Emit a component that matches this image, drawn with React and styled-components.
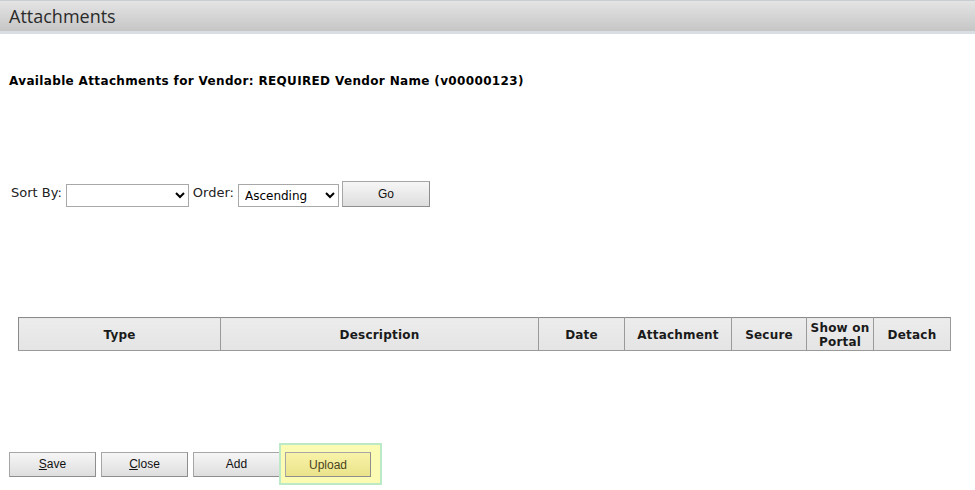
import styled, { createGlobalStyle } from "styled-components"

const Global = createGlobalStyle`
  html, body { margin: 0; padding: 0; background: #fff; }
  body { font-family: Verdana, "DejaVu Sans", sans-serif; color: #000; }
`

const columns = [
  { label: "Type", width: 201 },
  { label: "Description", width: 317 },
  { label: "Date", width: 85 },
  { label: "Attachment", width: 106 },
  { label: "Secure", width: 74 },
  { label: ["Show on", "Portal"], width: 66 },
  { label: "Detach", width: 76 },
]

export default function App() {
  return (
    <Page>
      <Global />
      <TitleBar>Attachments</TitleBar>
      <Heading>Available Attachments for Vendor: REQUIRED Vendor Name (v00000123)</Heading>
      <SortRow>
        <Label>Sort By:</Label>
        <Select width={123} defaultValue="">
          <option value=""></option>
          <option>Type</option>
          <option>Date</option>
        </Select>
        <Label>Order:</Label>
        <Select width={101} defaultValue="asc">
          <option value="asc">Ascending</option>
          <option value="desc">Descending</option>
        </Select>
        <Button width={88} tall>Go</Button>
      </SortRow>
      <TableWrap>
        <Table>
          <thead>
            <tr>
              {columns.map((c, i) => (
                <Th key={i} width={c.width}>
                  {Array.isArray(c.label) ? <>{c.label[0]}<br />{c.label[1]}</> : c.label}
                </Th>
              ))}
            </tr>
          </thead>
        </Table>
      </TableWrap>
      <Footer>
        <Button width={87}><u>S</u>ave</Button>
        <Button width={87}><u>C</u>lose</Button>
        <Button width={87}>Add</Button>
        <Highlight>
          <Button width={86} active>Upload</Button>
        </Highlight>
      </Footer>
    </Page>
  )
}

const Page = styled.div`
  width: 975px;
  height: 490px;
  overflow: hidden;
`
const TitleBar = styled.div`
  height: 30px;
  border-top: 1px solid #c9ced3;
  border-bottom: 3px solid #d8dee3;
  background: linear-gradient(#e4e4e4, #c6c6c6);
  padding-left: 9px;
  font-family: "Open Sans", "Liberation Sans", sans-serif;
  font-size: 18px;
  line-height: 30px;
  color: #2b2b2b;
`
const Heading = styled.div`
  margin: 39px 0 0 9px;
  font-size: 12px;
  font-weight: bold;
  line-height: 16px;
  letter-spacing: 0.35px;
`
const SortRow = styled.div`
  display: flex;
  align-items: flex-start;
  margin: 92px 0 0 11px;
  gap: 4px;
  & > button { margin-left: -1px; }
`
const Label = styled.span`
  font-size: 13px;
  line-height: 14px;
  padding-top: 5px;
  color: #222;
`
const Select = styled.select`
  width: ${p => p.width}px;
  height: 23px;
  margin-top: 3px;
  font-family: Verdana, "DejaVu Sans", sans-serif;
  font-size: 12px;
  border: 1px solid #a8a8a8;
  background: #fff;
  padding: 0 2px;
  color: #000;
`
const Button = styled.button`
  width: ${p => p.width}px;
  height: ${p => (p.tall ? 26 : 25)}px;
  border: 1px solid #a6a6a6;
  border-right-color: #8e8e8e;
  border-bottom-color: #8e8e8e;
  border-radius: 0;
  background: ${p => (p.active
    ? "linear-gradient(#f7f3a8, #ebe38b)"
    : "linear-gradient(#f6f6f6, #dedede)")};
  font-family: Arial, "Liberation Sans", sans-serif;
  font-size: 12px;
  color: ${p => (p.active ? "#4a4420" : "#111")};
  padding: 0;
  cursor: pointer;
`
const TableWrap = styled.div`
  margin: 110px 0 0 18px;
`
const Table = styled.table`
  border-collapse: collapse;
  width: 932px;
  table-layout: fixed;
`
const Th = styled.th`
  width: ${p => p.width}px;
  height: 30px;
  padding: 2px 0 0;
  background: linear-gradient(#ececec, #e4e4e4);
  border: 1px solid #9a9a9a;
  border-top-color: #8a8a8a;
  border-left-color: #8a8a8a;
  font-size: 12px;
  line-height: 14px;
  font-weight: bold;
  color: #1a1a1a;
  text-align: center;
  vertical-align: middle;
  letter-spacing: 0.2px;
`
const Footer = styled.div`
  display: flex;
  align-items: center;
  gap: 5px;
  margin: 92px 0 0 9px;
`
const Highlight = styled.div`
  display: flex;
  padding: 7px 9px 6px 4px;
  margin-left: -6px;
  background: #fbfbb4;
  border: 2px solid #bdeac6;
`
